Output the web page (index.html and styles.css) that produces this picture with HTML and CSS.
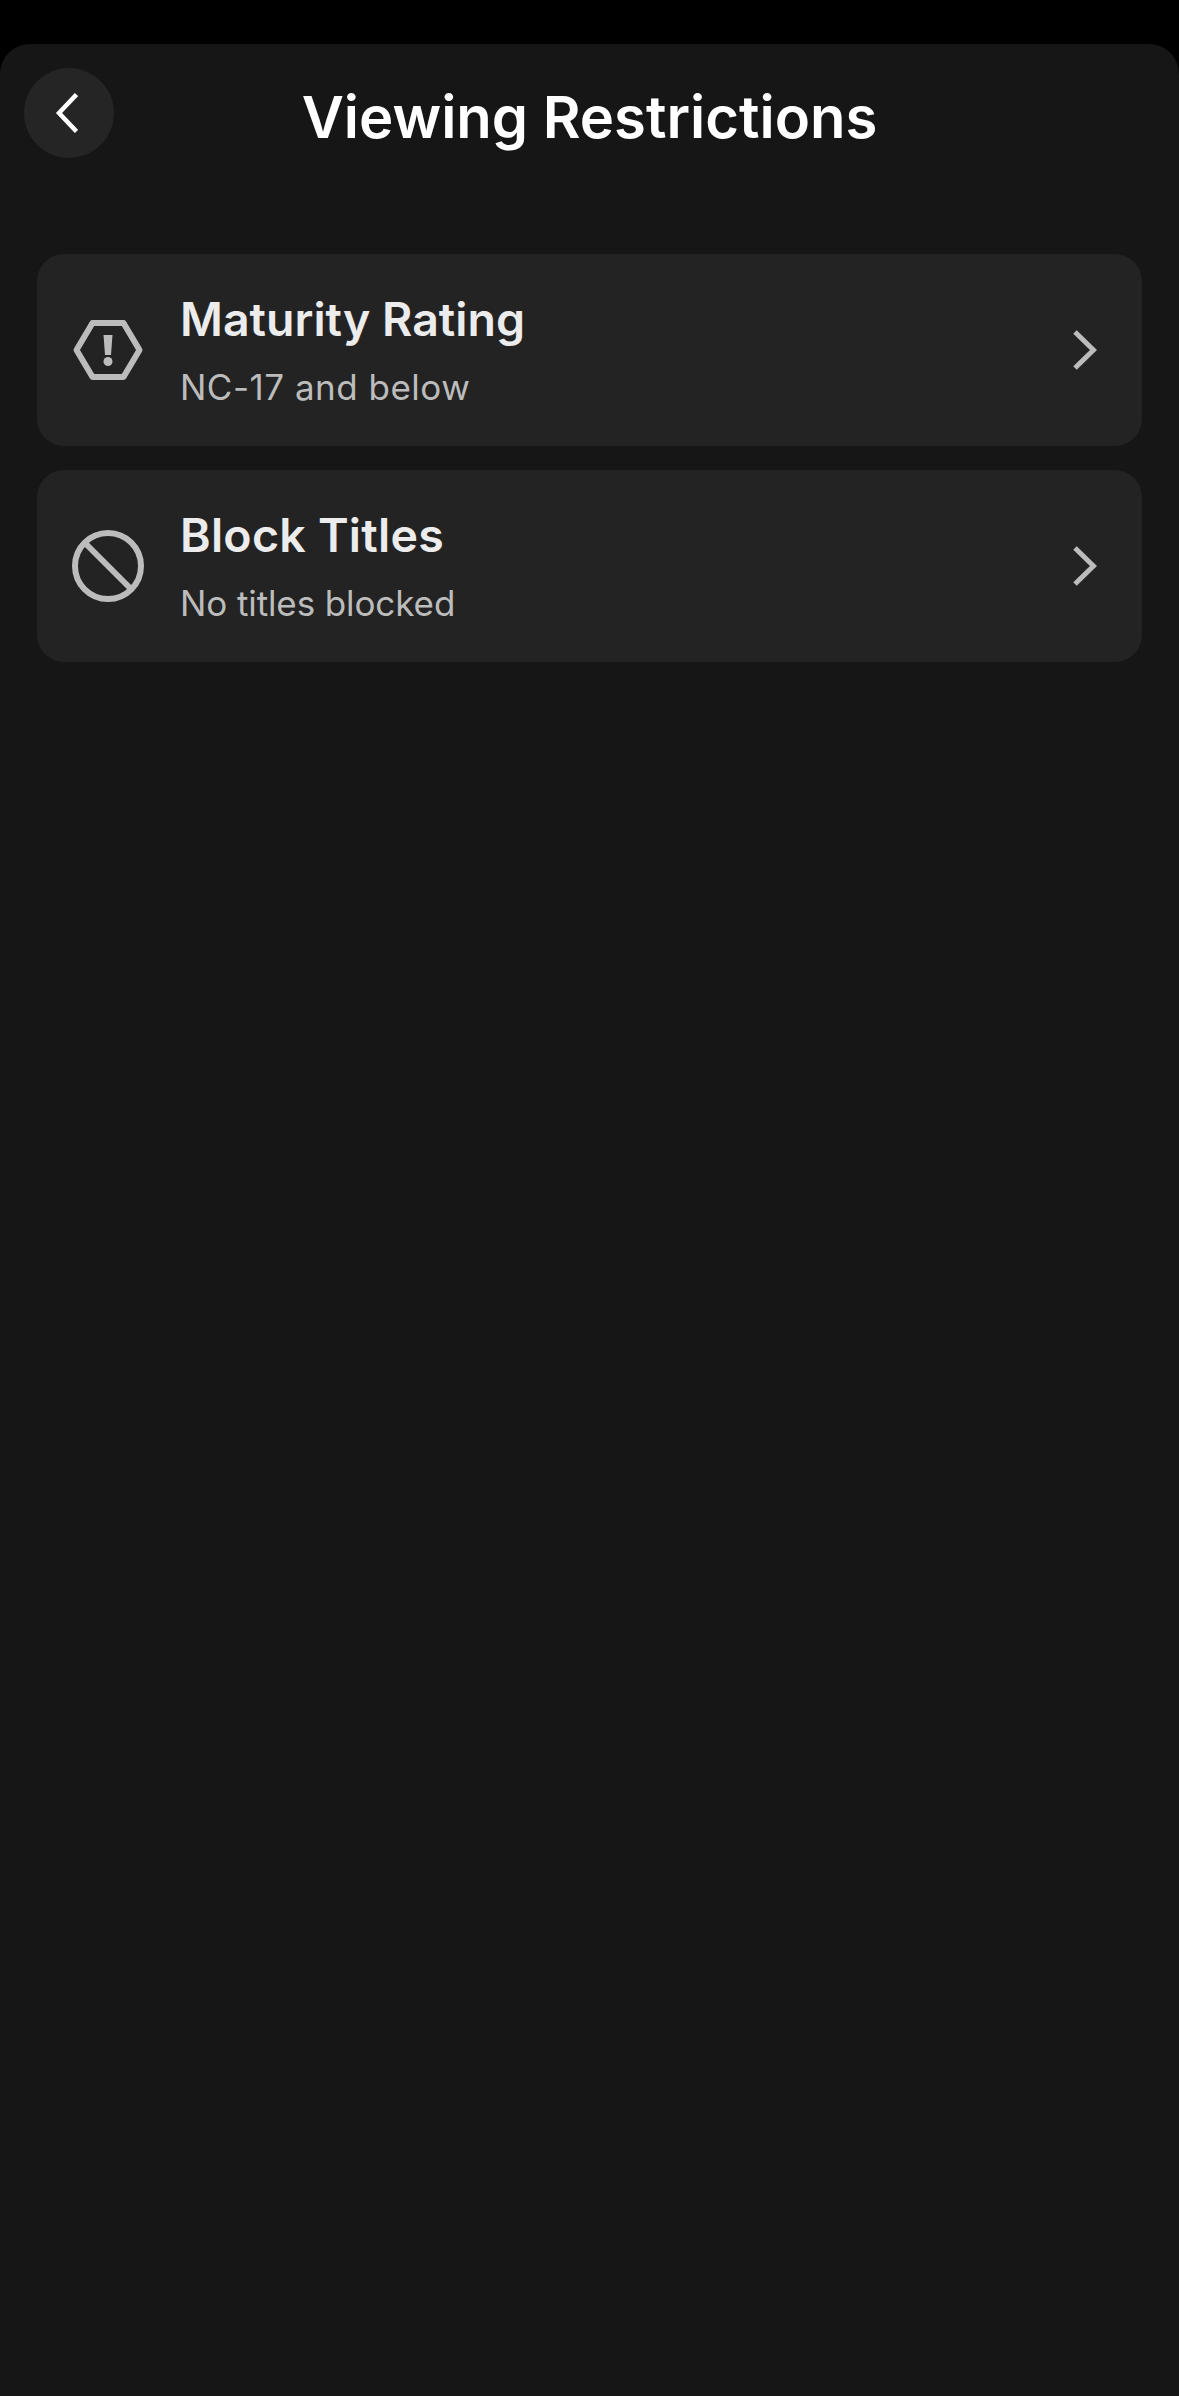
FILE: index.html
```html
<!DOCTYPE html>
<html lang="en">
<head>
<meta charset="utf-8">
<title>Viewing Restrictions</title>
<link rel="stylesheet" href="styles.css">
</head>
<body>
<main class="sheet">
  <header class="header">
    <button class="back" aria-label="Back">
      <svg class="back-icon" viewBox="0 0 24 40" width="24" height="40"><path d="M22.500 1.500 5 20l17.500 18.500" fill="none" stroke="#fff" stroke-width="4.500"/></svg>
    </button>
    <h1 class="title">Viewing Restrictions</h1>
  </header>
  <section class="list">
    <a class="row">
      <svg class="row-icon" viewBox="0 0 72 72" width="72" height="72">
        <path d="M20.500 9h31L67.500 36 51.500 63h-31L4.500 36Z" fill="none" stroke="#bcbcbc" stroke-width="6" stroke-linejoin="round"/>
        <path d="M31.500 21h9l-1.500 20h-6Z" fill="#bcbcbc"/>
        <circle cx="36" cy="47.500" r="4.500" fill="#bcbcbc"/>
      </svg>
      <div class="row-text">
        <div class="row-title">Maturity Rating</div>
        <div class="row-sub">NC-17 and below</div>
      </div>
      <svg class="chevron" viewBox="0 0 24 40" width="24" height="40"><path d="M2 2l18.500 18L2 38" fill="none" stroke="#bcbcbc" stroke-width="5"/></svg>
    </a>
    <a class="row">
      <svg class="row-icon" viewBox="0 0 72 72" width="72" height="72">
        <circle cx="36" cy="36" r="33" fill="none" stroke="#bcbcbc" stroke-width="6"/>
        <path d="M13 13l46 46" fill="none" stroke="#bcbcbc" stroke-width="6"/>
      </svg>
      <div class="row-text">
        <div class="row-title row-title-wide">Block Titles</div>
        <div class="row-sub row-sub-tight">No titles blocked</div>
      </div>
      <svg class="chevron" viewBox="0 0 24 40" width="24" height="40"><path d="M2 2l18.500 18L2 38" fill="none" stroke="#bcbcbc" stroke-width="5"/></svg>
    </a>
  </section>
</main>
</body>
</html>
```
FILE: styles.css
```css
* { box-sizing: border-box; }
html, body { height: 100%; }
body {
  margin: 0;
  padding-top: 44px;
  background: #000;
  font-family: Inter, "Liberation Sans", sans-serif;
}
.sheet {
  height: 2352px;
  background: #161616;
  border-radius: 30px 30px 0 0;
  padding: 24px 37px 0;
  overflow: hidden;
}
.header {
  display: grid;
  grid-template-columns: 90px 1fr 90px;
  align-items: center;
  margin-left: -13px;
  margin-right: -13px;
  height: 90px;
}
.back {
  width: 90px;
  height: 90px;
  border: 0;
  padding: 0 6px 0 0;
  border-radius: 50%;
  background: #252525;
  display: flex;
  align-items: center;
  justify-content: center;
}
.back-icon { display: block; }
.title {
  margin: 8px 0 0;
  text-align: center;
  color: #fff;
  font-size: 58px;
  line-height: 68px;
  font-weight: 600;
}
.list {
  margin-top: 96px;
  display: flex;
  flex-direction: column;
  gap: 24px;
}
.row {
  height: 192px;
  background: #232323;
  border-radius: 27px;
  display: flex;
  align-items: center;
  padding: 0 45px 0 35px;
}
.row-icon { flex: none; display: block; }
.row-text { flex: 1; margin-left: 36px; }
.row-title {
  color: #ececec;
  font-size: 46.500px;
  line-height: 54px;
  font-weight: 600;
}
.row-title-wide { letter-spacing: 0.25px; }
.row-sub {
  margin-top: 20px;
  color: #bcbcbc;
  font-size: 35px;
  letter-spacing: 0.5px;
  line-height: 42px;
  font-weight: 400;
}
.row-sub-tight { letter-spacing: -0.1px; }
.chevron { flex: none; display: block; }
```
